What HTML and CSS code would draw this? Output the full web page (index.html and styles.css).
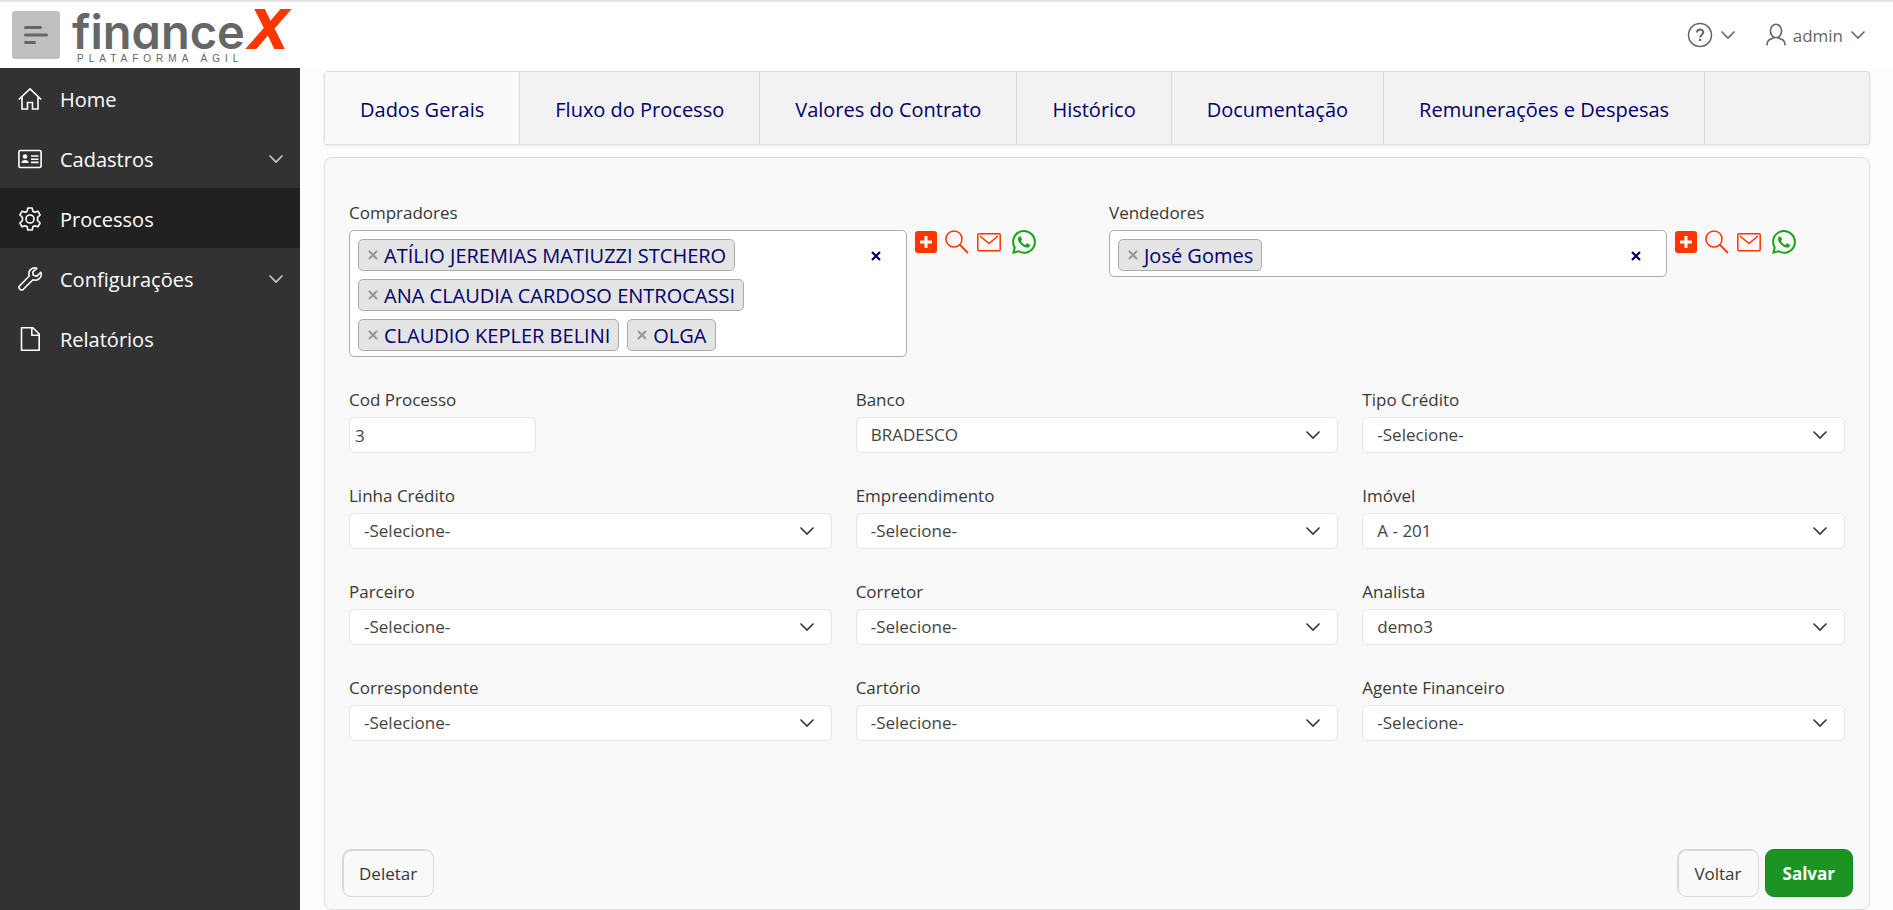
FILE: index.html
```html
<!DOCTYPE html>
<html lang="pt-BR">
<head>
<meta charset="utf-8">
<meta name="viewport" content="width=device-width, initial-scale=1">
<title>financeX</title>
<link rel="stylesheet" href="styles.css">
</head>
<body>
<svg class="sprite" aria-hidden="true">
  <symbol id="chevron" viewBox="0 0 16 10"><path d="M1.500 1.500 8 8l6.500-6.500" fill="none" stroke="currentColor" stroke-width="1.600"/></symbol>
  <symbol id="cross" viewBox="0 0 10 10"><path d="M1 1l8 8M9 1l-8 8" fill="none" stroke="currentColor" stroke-width="2.200"/></symbol>
  <symbol id="plus" viewBox="0 0 22 22"><rect width="22" height="22" rx="3" fill="currentColor"/><path d="M11 5v12M5 11h12" stroke="#fff" stroke-width="3"/></symbol>
  <symbol id="search" viewBox="0 0 24 24"><circle cx="9" cy="9" r="8" fill="none" stroke="currentColor" stroke-width="1.500"/><path d="M14.700 14.700 23 23" stroke="currentColor" stroke-width="1.800"/></symbol>
  <symbol id="mail" viewBox="0 0 24 24"><rect x=".8" y="3.800" width="22.400" height="17" rx="1" fill="none" stroke="currentColor" stroke-width="1.500"/><path d="M3 6l9 7.500L21 6" fill="none" stroke="currentColor" stroke-width="1.500"/></symbol>
  <symbol id="whatsapp" viewBox="0 0 16 16"><path fill="currentColor" d="M13.601 2.326A7.850 7.850 0 0 0 7.994 0C3.627 0 .068 3.558.064 7.926c0 1.399.366 2.760 1.057 3.965L0 16l4.204-1.102a7.900 7.900 0 0 0 3.790.965h.004c4.368 0 7.926-3.558 7.930-7.930A7.900 7.900 0 0 0 13.600 2.326zM7.994 14.521a6.600 6.600 0 0 1-3.356-.92l-.24-.144-2.494.654.666-2.433-.156-.251a6.560 6.560 0 0 1-1.007-3.505c0-3.626 2.957-6.584 6.591-6.584a6.560 6.560 0 0 1 4.660 1.931 6.560 6.560 0 0 1 1.928 4.660c-.004 3.639-2.961 6.592-6.592 6.592m3.615-4.934c-.197-.099-1.170-.578-1.353-.646-.182-.065-.315-.099-.445.099-.133.197-.513.646-.627.775-.114.133-.232.148-.43.050-.197-.1-.836-.308-1.592-.985-.59-.525-.985-1.175-1.103-1.372-.114-.198-.011-.304.088-.403.087-.088.197-.232.296-.346.1-.114.133-.198.198-.33.065-.134.034-.248-.015-.347-.05-.099-.445-1.076-.612-1.470-.16-.389-.323-.335-.445-.34-.114-.007-.247-.007-.38-.007a.73.73 0 0 0-.529.247c-.182.198-.691.677-.691 1.654s.71 1.916.81 2.049c.098.133 1.394 2.132 3.383 2.992.47.205.84.326 1.129.418.475.152.904.129 1.246.080.38-.058 1.171-.48 1.338-.943.164-.464.164-.86.114-.943-.049-.084-.182-.133-.38-.232"/></symbol>
</svg>

<header class="header">
  <button class="menu-toggle" type="button" aria-label="Menu">
    <svg width="24" height="20" viewBox="0 0 24 20"><path d="M1.500 2.500h15M1.500 10h21M1.500 17.500h9" stroke="#666" stroke-width="3" stroke-linecap="round"/></svg>
  </button>
  <a class="logo" href="#" aria-label="financeX">
    <svg width="240" height="66" viewBox="0 2 240 66">
      <text class="logo-name" x="0" y="49">finance</text>
      <text class="logo-x" x="178" y="48">X</text>
      <text class="logo-tag" x="5" y="62">PLATAFORMA ÁGIL</text>
    </svg>
  </a>
  <nav class="user-nav">
    <button class="nav-button" type="button" aria-label="Ajuda">
      <svg width="26" height="26" viewBox="0 0 26 26" fill="none" stroke="currentColor"><circle cx="13" cy="13" r="11.500" stroke-width="1.500"/><path d="M10 10.500c0-4 6.300-4 6.300-.2 0 2.400-3.200 2.500-3.200 5.200" stroke-width="2"/><path d="M12 18h2.200" stroke-width="2.200"/></svg>
      <svg class="chevron"><use href="#chevron"/></svg>
    </button>
    <button class="nav-button" type="button">
      <svg width="20" height="24" viewBox="0 0 20 24" fill="none" stroke="currentColor" stroke-width="1.600"><ellipse cx="10" cy="8" rx="5.600" ry="6.800"/><path d="M1 22.500c0-5 2-6 6.500-7.500v-1.200M19 22.500c0-5-2-6-6.500-7.500v-1.200"/></svg>
      <span>admin</span>
      <svg class="chevron"><use href="#chevron"/></svg>
    </button>
  </nav>
</header>

<div class="layout">
  <nav class="sidebar">
    <a class="side-item" href="#">
      <svg class="side-icon" viewBox="0 0 24 24"><path d="M.8 12.500 12 1.800l11.200 10.700M4 9.800V22h5.500v-6.500h5V22H20V9.800"/></svg>
      <span>Home</span>
    </a>
    <a class="side-item" href="#">
      <svg class="side-icon" viewBox="0 0 24 24"><rect x=".9" y="3.500" width="22.200" height="17" rx="1.500"/><path d="M13 9h7.500M13 12.200h7.500M13 15.400h7.500" /><circle class="solid" cx="7" cy="9.500" r="2.300"/><path class="solid" d="M3.300 16c0-4 7.400-4 7.400 0z"/></svg>
      <span>Cadastros</span>
      <svg class="chevron side-chevron"><use href="#chevron"/></svg>
    </a>
    <a class="side-item active" href="#">
      <svg class="side-icon" viewBox="0 0 24 24"><circle cx="12" cy="12" r="4"/><path d="M9.800 1h4.400l.6 3.200 2 1.100 3.100-1.100 2.200 3.800-2.500 2.300v3.400l2.500 2.300-2.200 3.800-3.100-1.100-2 1.100-.6 3.200H9.800l-.6-3.200-2-1.100-3.100 1.100L1.900 16l2.500-2.300v-3.400L1.900 8l2.200-3.800 3.100 1.100 2-1.100z" stroke-linejoin="round"/></svg>
      <span>Processos</span>
    </a>
    <a class="side-item" href="#">
      <svg class="side-icon" viewBox="0 0 24 24"><path d="M18.800 1.300c-4-1.500-9.500 2-7.600 7.700L1.700 18.700c-2 2.200 1.200 5.600 3.600 3.600L15 12.800c5.600 1.900 9.600-3.500 7.800-7.500l-3.900 3.800-3.600-.8-.6-3.300z" stroke-linejoin="round"/></svg>
      <span>Configurações</span>
      <svg class="chevron side-chevron"><use href="#chevron"/></svg>
    </a>
    <a class="side-item" href="#">
      <svg class="side-icon" viewBox="0 0 24 24"><path d="M3.500.8h11.300l6.400 6.200v16.200H3.500zM13.800 1v7.200H21" stroke-linejoin="round"/></svg>
      <span>Relatórios</span>
    </a>
  </nav>

  <main class="content">
    <nav class="tabs">
      <a class="tab current" href="#">Dados Gerais</a>
      <a class="tab" href="#">Fluxo do Processo</a>
      <a class="tab" href="#">Valores do Contrato</a>
      <a class="tab" href="#">Histórico</a>
      <a class="tab" href="#">Documentação</a>
      <a class="tab" href="#">Remunerações e Despesas</a>
    </nav>

    <form class="panel">
      <div class="people">
        <div class="field" role="group" aria-labelledby="lbl-compradores">
          <span class="label" id="lbl-compradores">Compradores</span>
          <div class="picker-row">
            <div class="picker">
              <ul class="chips">
                <li class="chip"><button class="chip-remove" type="button" aria-label="Remover"><svg class="cross"><use href="#cross"/></svg></button>ATÍLIO JEREMIAS MATIUZZI STCHERO</li>
                <li class="chip"><button class="chip-remove" type="button" aria-label="Remover"><svg class="cross"><use href="#cross"/></svg></button>ANA CLAUDIA CARDOSO ENTROCASSI</li>
                <li class="chip"><button class="chip-remove" type="button" aria-label="Remover"><svg class="cross"><use href="#cross"/></svg></button>CLAUDIO KEPLER BELINI</li>
                <li class="chip"><button class="chip-remove" type="button" aria-label="Remover"><svg class="cross"><use href="#cross"/></svg></button>OLGA</li>
              </ul>
              <button class="clear" type="button" aria-label="Limpar"><svg class="cross"><use href="#cross"/></svg></button>
            </div>
            <div class="actions">
              <button class="action" type="button" aria-label="Adicionar"><svg width="22" height="22"><use href="#plus"/></svg></button>
              <button class="action" type="button" aria-label="Pesquisar"><svg width="24" height="24"><use href="#search"/></svg></button>
              <button class="action" type="button" aria-label="E-mail"><svg width="24" height="24"><use href="#mail"/></svg></button>
              <button class="action green" type="button" aria-label="WhatsApp"><svg width="24" height="24"><use href="#whatsapp"/></svg></button>
            </div>
          </div>
        </div>
        <div class="field" role="group" aria-labelledby="lbl-vendedores">
          <span class="label" id="lbl-vendedores">Vendedores</span>
          <div class="picker-row">
            <div class="picker">
              <ul class="chips">
                <li class="chip"><button class="chip-remove" type="button" aria-label="Remover"><svg class="cross"><use href="#cross"/></svg></button>José Gomes</li>
              </ul>
              <button class="clear" type="button" aria-label="Limpar"><svg class="cross"><use href="#cross"/></svg></button>
            </div>
            <div class="actions">
              <button class="action" type="button" aria-label="Adicionar"><svg width="22" height="22"><use href="#plus"/></svg></button>
              <button class="action" type="button" aria-label="Pesquisar"><svg width="24" height="24"><use href="#search"/></svg></button>
              <button class="action" type="button" aria-label="E-mail"><svg width="24" height="24"><use href="#mail"/></svg></button>
              <button class="action green" type="button" aria-label="WhatsApp"><svg width="24" height="24"><use href="#whatsapp"/></svg></button>
            </div>
          </div>
        </div>
      </div>

      <div class="fields">
        <div class="field"><label class="label" for="cod">Cod Processo</label><input class="control code" id="cod" type="text" value="3"></div>
        <div class="field"><label class="label" for="banco">Banco</label><div class="select"><select class="control" id="banco"><option>BRADESCO</option></select><svg class="chevron"><use href="#chevron"/></svg></div></div>
        <div class="field"><label class="label" for="tipo">Tipo Crédito</label><div class="select"><select class="control" id="tipo"><option>-Selecione-</option></select><svg class="chevron"><use href="#chevron"/></svg></div></div>
        <div class="field"><label class="label" for="linha">Linha Crédito</label><div class="select"><select class="control" id="linha"><option>-Selecione-</option></select><svg class="chevron"><use href="#chevron"/></svg></div></div>
        <div class="field"><label class="label" for="empreendimento">Empreendimento</label><div class="select"><select class="control" id="empreendimento"><option>-Selecione-</option></select><svg class="chevron"><use href="#chevron"/></svg></div></div>
        <div class="field"><label class="label" for="imovel">Imóvel</label><div class="select"><select class="control" id="imovel"><option>A - 201</option></select><svg class="chevron"><use href="#chevron"/></svg></div></div>
        <div class="field"><label class="label" for="parceiro">Parceiro</label><div class="select"><select class="control" id="parceiro"><option>-Selecione-</option></select><svg class="chevron"><use href="#chevron"/></svg></div></div>
        <div class="field"><label class="label" for="corretor">Corretor</label><div class="select"><select class="control" id="corretor"><option>-Selecione-</option></select><svg class="chevron"><use href="#chevron"/></svg></div></div>
        <div class="field"><label class="label" for="analista">Analista</label><div class="select"><select class="control" id="analista"><option>demo3</option></select><svg class="chevron"><use href="#chevron"/></svg></div></div>
        <div class="field"><label class="label" for="correspondente">Correspondente</label><div class="select"><select class="control" id="correspondente"><option>-Selecione-</option></select><svg class="chevron"><use href="#chevron"/></svg></div></div>
        <div class="field"><label class="label" for="cartorio">Cartório</label><div class="select"><select class="control" id="cartorio"><option>-Selecione-</option></select><svg class="chevron"><use href="#chevron"/></svg></div></div>
        <div class="field"><label class="label" for="agente">Agente Financeiro</label><div class="select"><select class="control" id="agente"><option>-Selecione-</option></select><svg class="chevron"><use href="#chevron"/></svg></div></div>
      </div>

      <div class="footer">
        <button class="btn push" type="button">Deletar</button>
        <button class="btn" type="button">Voltar</button>
        <button class="btn primary" type="submit">Salvar</button>
      </div>
    </form>
  </main>
</div>
</body>
</html>
```

FILE: styles.css
```css
* { box-sizing: border-box; }

body {
  margin: 0;
  min-height: 100vh;
  display: flex;
  flex-direction: column;
  background: #fdfdfd;
  color: #383838;
  font-family: "Open Sans", "Noto Sans", sans-serif;
  font-size: 17px;
}

button { font: inherit; color: inherit; background: none; border: 0; padding: 0; cursor: pointer; }
a { color: inherit; text-decoration: none; }
svg { display: block; flex: none; }
.sprite { display: none; }
.chevron { width: 16px; height: 10px; }
.cross { width: 10px; height: 10px; }

/* header */
.header {
  display: flex;
  align-items: center;
  height: 68px;
  padding: 2px 27px 0 12px;
  background: #fff;
  box-shadow: inset 0 2px 0 #e2e2e2;
}
.menu-toggle {
  display: flex;
  align-items: center;
  justify-content: center;
  width: 48px;
  height: 48px;
  border-radius: 3px;
  background: #bfbfbf;
}
.logo { margin-left: 12px; }
.logo svg { overflow: visible; }
.logo-name { font: 600 47px "Inter", sans-serif; font-feature-settings: "cv11"; fill: #666; }
.logo-x { font: italic 700 55px "Liberation Sans", sans-serif; fill: #ff3500; stroke: #ff3500; stroke-width: 2px; }
.logo-tag { font: 10px "Liberation Sans", sans-serif; letter-spacing: 5px; fill: #666; }
.user-nav { display: flex; gap: 30px; margin-left: auto; color: #666; }
.nav-button { display: flex; align-items: center; gap: 7px; }

/* layout */
.layout { display: flex; flex: 1; }
.sidebar { width: 300px; flex: none; background: #323232; color: #fff; font-size: 20px; }
.side-item { display: flex; align-items: center; gap: 18px; height: 60px; padding: 2px 16px 0 18px; }
.side-item.active { background: #212121; }
.side-icon { width: 24px; height: 24px; fill: none; stroke: currentColor; stroke-width: 1.6; }
.side-icon .solid { fill: currentColor; stroke: none; }
.side-chevron { margin-left: auto; color: #ccc; }

.content {
  flex: 1;
  min-width: 0;
  display: flex;
  flex-direction: column;
  gap: 12px;
  padding: 3px 23px 0 24px;
}

/* tabs */
.tabs {
  display: flex;
  flex: none;
  height: 74px;
  border: 1px solid #dedede;
  border-radius: 3px;
  background: #f2f2f2;
  box-shadow: 0 2px 4px rgba(0, 0, 0, .06);
  color: #00006b;
  font-size: 20px;
}
.tab { display: flex; align-items: center; padding: 2px 35px 0; border-right: 1px solid #d9d9d9; white-space: nowrap; }
.tab.current { background: #fafafa; }

/* form panel */
.panel {
  flex: 1;
  display: flex;
  flex-direction: column;
  gap: 30px;
  padding: 42px 16px 12px 17px;
  border: 1px solid #dedede;
  border-radius: 8px;
  background: #f9f9f9;
}
.people, .fields { display: grid; gap: 30px 24px; padding: 0 8px 0 7px; }
.people { grid-template-columns: repeat(2, minmax(0, 1fr)); }
.fields { grid-template-columns: repeat(3, minmax(0, 1fr)); }
.label { display: block; line-height: 26px; margin-bottom: 4px; }

.picker-row { display: flex; align-items: flex-start; gap: 8px; }
.picker {
  display: flex;
  align-items: flex-start;
  width: calc(100% - 178px);
  padding: 8px 8px 5px;
  border: 1px solid #aaa;
  border-radius: 5px;
  background: #fff;
}
.chips { flex: 1; display: flex; flex-wrap: wrap; gap: 8px; margin: 0; padding: 0; list-style: none; }
.chip {
  display: flex;
  align-items: center;
  gap: 6px;
  height: 32px;
  padding: 0 8px 0 9px;
  border: 1px solid #aaa;
  border-radius: 5px;
  background: #e4e4e4;
  color: #00006b;
  font-size: 20px;
  white-space: nowrap;
}
.chip-remove { color: #999; }
.clear { padding: 12px 17px 8px; color: #00006b; }
.actions { display: flex; align-items: center; gap: 8px; color: #ff3500; }
.green { color: #1ba51b; padding-left: 3px; }

.control {
  width: 100%;
  height: 36px;
  border: 1px solid #e5e5e5;
  border-radius: 5px;
  background: #fff;
  color: #444;
  font: inherit;
  appearance: none;
  padding: 0 40px 2px 14px;
}
.control.code { display: block; width: 187px; padding: 0 5px; }
.select { display: grid; grid-template-columns: 1fr auto; align-items: center; }
.select .control { grid-area: 1 / 1 / 2 / 3; }
.select .chevron { grid-area: 1 / 2; margin-right: 17px; z-index: 1; pointer-events: none; }

.footer { display: flex; gap: 6px; margin-top: auto; }
.btn {
  height: 48px;
  padding: 0 16px;
  border: 1px solid #d9d9d9;
  border-radius: 9px;
  box-shadow: inset 1px 1px 0 #d9d9d9;
}
.btn.push { margin-right: auto; }
.btn.primary { padding: 0 17px; background: #1c9423; border-color: #178220; box-shadow: none; color: #fff; font-weight: 700; }
```
